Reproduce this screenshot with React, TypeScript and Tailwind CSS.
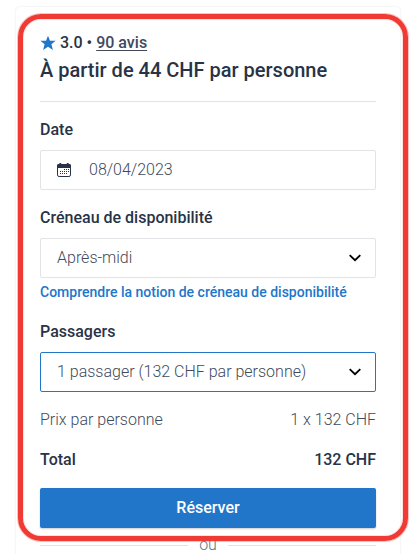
import React from 'react';

interface SelectFieldProps {
  label: string;
  value: string;
  active?: boolean;
}

const StarIcon: React.FC = () => (
  <svg className="w-4 h-4 shrink-0" viewBox="0 0 16 16" fill="#2176ca">
    <path d="M8 .8l2 4.9h5.6l-4.2 3.6 1.5 5.6L8 11.7l-4.9 3.2 1.5-5.6L.4 5.7H6z" />
  </svg>
);

const CalendarIcon: React.FC = () => (
  <svg className="w-4 h-4 shrink-0" viewBox="0 0 16 16" fill="none">
    <rect x="1.5" y="2.5" width="13" height="12" rx="1.6" stroke="#283347" />
    <path d="M1 6V3.6C1 2.7 1.7 2 2.6 2h.8V1h1.8v1h5.6V1h1.8v1h.8c.9 0 1.6.7 1.6 1.6V6z" fill="#283347" />
    <path
      d="M8 7.5h1M10 7.5h1M12 7.5h1M4 9.5h1M6 9.5h1M8 9.5h1M10 9.5h1M12 9.5h1M4 11.5h1M6 11.5h1M8 11.5h1M10 11.5h1"
      stroke="#283347"
      strokeWidth="1"
    />
  </svg>
);

const ChevronIcon: React.FC = () => (
  <svg className="w-3 h-2 shrink-0" viewBox="0 0 12 8" fill="none">
    <path d="M.7 1.1L6 6.2l5.3-5.1" stroke="#000" strokeWidth="1.8" />
  </svg>
);

const SelectField: React.FC<SelectFieldProps> = ({ label, value, active }) => (
  <div>
    <div className="font-medium">{label}</div>
    <button
      className={`mt-2 flex h-10 w-full items-center justify-between rounded-xs border pr-[14px] pl-4 font-light text-[#414a5c] ${
        active ? 'border-[#2176ca]' : 'border-[#e2e3e6]'
      }`}
    >
      <span>{value}</span>
      <ChevronIcon />
    </button>
  </div>
);

export default function App() {
  return (
    <div className="relative h-[554px] w-[415px] overflow-hidden bg-white font-['Roboto',sans-serif] text-base text-[#283347]">
      <div className="mt-[7px] ml-4 h-[600px] w-[384px] rounded-sm px-6 pt-6 shadow-[0_0_2px_rgba(0,0,0,0.12)]">
        <div className="flex h-6 items-center">
          <StarIcon />
          <span className="ml-1 font-medium">
            3.0 • <span className="text-[#414a5c] underline underline-offset-2">90 avis</span>
          </span>
        </div>
        <h1 className="mt-px text-xl font-medium whitespace-nowrap">À partir de 44 CHF par personne</h1>
        <hr className="mt-[17px] border-[#e2e3e6]" />

        <div className="mt-4 mb-4">
          <div className="font-medium">Date</div>
          <div className="mt-2 flex h-10 items-center rounded-xs border border-[#e2e3e6] px-[15px] font-light text-[#414a5c]">
            <CalendarIcon />
            <span className="ml-[17px]">08/04/2023</span>
          </div>
        </div>

        <SelectField label="Créneau de disponibilité" value="Après-midi" />
        <a className="mt-1 mb-[18px] block text-sm font-medium whitespace-nowrap text-[#2176ca]">
          Comprendre la notion de créneau de disponibilité
        </a>
        <SelectField label="Passagers" value="1 passager (132 CHF par personne)" active />

        <div className="mt-4 flex justify-between font-light text-[#414a5c]">
          <span>Prix par personne</span>
          <span>1 x 132 CHF</span>
        </div>
        <div className="mt-4 flex justify-between font-medium">
          <span>Total</span>
          <span>132 CHF</span>
        </div>

        <button className="mt-4 h-10 w-full rounded-xs bg-[#2176ca] font-medium text-white shadow-[0_1px_2px_rgba(0,0,0,0.2)]">
          Réserver
        </button>
        <div className="mt-[5px] flex items-center gap-[11px] font-light text-[#6a7280]">
          <span className="h-px flex-1 bg-[#e2e3e6]" />
          <span>ou</span>
          <span className="h-px flex-1 bg-[#e2e3e6]" />
        </div>
      </div>

      {/* red highlight drawn over the booking card */}
      <div className="pointer-events-none absolute top-[14px] left-[18px] h-[527px] w-[390px] rounded-[23px] border-[5px] border-[#f03a34] shadow-[0_0_0_1px_rgba(240,58,52,0.3),inset_0_0_0_1px_rgba(240,58,52,0.15)]" />
    </div>
  );
}
